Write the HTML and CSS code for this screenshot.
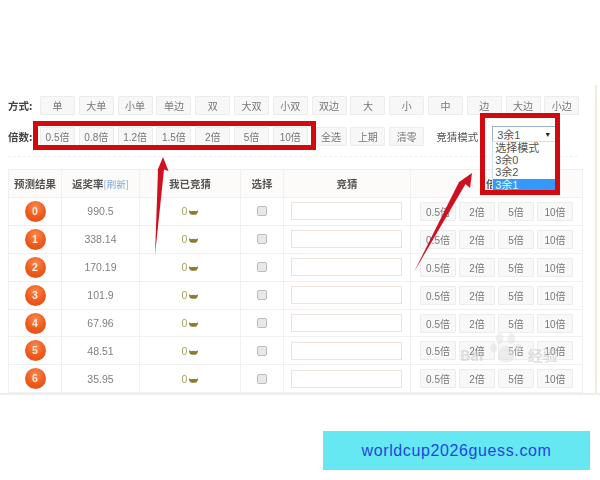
FILE: index.html
```html
<!DOCTYPE html>
<html lang="zh">
<head>
<meta charset="utf-8">
<title>竞猜</title>
<link rel="stylesheet" href="styles.css">
</head>
<body>
<div class="page">
  <div class="sheet">
    <div class="toolbar first">
      <span class="label">方式:</span>
      <div class="btns"><button>单</button><button>大单</button><button>小单</button><button>单边</button><button>双</button><button>大双</button><button>小双</button><button>双边</button><button>大</button><button>小</button><button>中</button><button>边</button><button>大边</button><button>小边</button></div>
    </div>
    <div class="toolbar second">
      <span class="label">倍数:</span>
      <div class="btns"><button>0.5倍</button><button>0.8倍</button><button>1.2倍</button><button>1.5倍</button><button>2倍</button><button>5倍</button><button>10倍</button><button class="narrow">全选</button><button>上期</button><button>清零</button></div>
      <span class="mode">竞猜模式</span>
      <div class="select">
        <div class="closed"><span>3余1</span><i>▼</i></div>
        <ul class="options"><li>选择模式</li><li>3余0</li><li>3余2</li><li class="on">3余1</li></ul>
      </div>
    </div>
    <div class="rule"></div>
    <table>
      <colgroup><col class="c1"><col class="c2"><col class="c3"><col class="c4"><col class="c5"><col class="c6"></colgroup>
      <thead><tr><th>预测结果</th><th>返奖率<span class="refresh">[刷新]</span></th><th>我已竞猜</th><th>选择</th><th>竞猜</th><th>倍数</th></tr></thead>
      <tbody>
        <tr><td><span class="ball">0</span></td><td>990.5</td><td class="bet">0<svg class="ingot" viewBox="0 0 10 6"><path d="M0 1 L2.5 2.2 Q5 1 7.5 2.2 L10 1 Q10 5 7 6 H3 Q0 5 0 1Z"/></svg></td><td><span class="check"></span></td><td><span class="field"></span></td><td><div class="mini"><button>0.5倍</button><button>2倍</button><button>5倍</button><button>10倍</button></div></td></tr>
        <tr><td><span class="ball">1</span></td><td>338.14</td><td class="bet">0<svg class="ingot" viewBox="0 0 10 6"><path d="M0 1 L2.5 2.2 Q5 1 7.5 2.2 L10 1 Q10 5 7 6 H3 Q0 5 0 1Z"/></svg></td><td><span class="check"></span></td><td><span class="field"></span></td><td><div class="mini"><button>0.5倍</button><button>2倍</button><button>5倍</button><button>10倍</button></div></td></tr>
        <tr><td><span class="ball">2</span></td><td>170.19</td><td class="bet">0<svg class="ingot" viewBox="0 0 10 6"><path d="M0 1 L2.5 2.2 Q5 1 7.5 2.2 L10 1 Q10 5 7 6 H3 Q0 5 0 1Z"/></svg></td><td><span class="check"></span></td><td><span class="field"></span></td><td><div class="mini"><button>0.5倍</button><button>2倍</button><button>5倍</button><button>10倍</button></div></td></tr>
        <tr><td><span class="ball">3</span></td><td>101.9</td><td class="bet">0<svg class="ingot" viewBox="0 0 10 6"><path d="M0 1 L2.5 2.2 Q5 1 7.5 2.2 L10 1 Q10 5 7 6 H3 Q0 5 0 1Z"/></svg></td><td><span class="check"></span></td><td><span class="field"></span></td><td><div class="mini"><button>0.5倍</button><button>2倍</button><button>5倍</button><button>10倍</button></div></td></tr>
        <tr><td><span class="ball">4</span></td><td>67.96</td><td class="bet">0<svg class="ingot" viewBox="0 0 10 6"><path d="M0 1 L2.5 2.2 Q5 1 7.5 2.2 L10 1 Q10 5 7 6 H3 Q0 5 0 1Z"/></svg></td><td><span class="check"></span></td><td><span class="field"></span></td><td><div class="mini"><button>0.5倍</button><button>2倍</button><button>5倍</button><button>10倍</button></div></td></tr>
        <tr><td><span class="ball">5</span></td><td>48.51</td><td class="bet">0<svg class="ingot" viewBox="0 0 10 6"><path d="M0 1 L2.5 2.2 Q5 1 7.5 2.2 L10 1 Q10 5 7 6 H3 Q0 5 0 1Z"/></svg></td><td><span class="check"></span></td><td><span class="field"></span></td><td><div class="mini"><button>0.5倍</button><button>2倍</button><button>5倍</button><button>10倍</button></div></td></tr>
        <tr><td><span class="ball">6</span></td><td>35.95</td><td class="bet">0<svg class="ingot" viewBox="0 0 10 6"><path d="M0 1 L2.5 2.2 Q5 1 7.5 2.2 L10 1 Q10 5 7 6 H3 Q0 5 0 1Z"/></svg></td><td><span class="check"></span></td><td><span class="field"></span></td><td><div class="mini"><button>0.5倍</button><button>2倍</button><button>5倍</button><button>10倍</button></div></td></tr>
      </tbody>
    </table>
    <div class="frame frame-left"></div>
    <div class="frame frame-right"></div>
    <svg class="arrows" viewBox="0 0 600 480" aria-hidden="true">
      <path class="arrow" d="M163 157 L168.500 171 L164 169.500 L155 255 L158 170 L157 171.500 Z"/>
      <path class="arrow" d="M472 173 L470 188 L465.500 184 L414 272 L459 182 L462 180 Z"/>
    </svg>
    <div class="mark">
      <span>Bai</span>
      <svg class="paw" viewBox="0 0 30 30"><ellipse cx="9" cy="6" rx="3.500" ry="5"/><ellipse cx="20" cy="6" rx="3.500" ry="5"/><ellipse cx="3.500" cy="15" rx="3" ry="4"/><ellipse cx="26.500" cy="15" rx="3" ry="4"/><path d="M15 13 C9 13 5 24 9 27 C12 29 18 29 21 27 C25 24 21 13 15 13Z"/></svg>
      <span>经验</span>
    </div>
  </div>
  <div class="banner">worldcup2026guess.com</div>
</div>
</body>
</html>
```
FILE: styles.css
```css
* { box-sizing: border-box; }
html, body { margin: 0; padding: 0; background: #fff; }
body { width: 600px; height: 480px; overflow: hidden; font-family: "Liberation Sans", "Noto Sans CJK SC", sans-serif; color: #777; }
.page { width: 600px; height: 480px; }
.sheet { position: relative; height: 395px; padding: 96px 0 0 8px; border-bottom: 2px solid #eeeeee; filter: blur(0.55px); }
.sheet::after { content: ""; position: absolute; right: 3px; top: 85px; bottom: 0; width: 2px; background: #f3ead9; }
.toolbar { display: flex; align-items: center; height: 19px; }
.second { margin-top: 12px; }
.label { width: 32px; font: bold 10.5px "Noto Sans CJK SC", sans-serif; color: #444; white-space: nowrap; }
.btns { display: flex; gap: 3.8px; }
button { width: 35px; height: 19px; padding: 0; font: 10px "Liberation Sans", "Noto Sans CJK SC", sans-serif; color: #777; background: #f7f7f7; border: 1px solid #ececec; border-radius: 1px; white-space: nowrap; }
.narrow { margin-left: 4px; width: 31px; }
.mode { margin-left: 12px; font: 10.5px "Noto Sans CJK SC", sans-serif; color: #555; white-space: nowrap; }
.select { position: relative; align-self: flex-start; margin: -1px 0 0 14px; width: 64px; height: 16px; }
.closed { display: flex; justify-content: space-between; align-items: center; height: 16px; padding: 0 4px; font: 11px "Liberation Sans", "Noto Sans CJK SC", sans-serif; color: #555; background: #fff; border: 1px solid #9db4d0; }
.closed i { font-size: 7px; font-style: normal; color: #222; }
.options { position: absolute; z-index: 2; left: 0; top: 15px; width: 64px; height: 50px; margin: 0; padding: 0; list-style: none; background: #fff; border: 1px solid #cfe0ee; font: 11px/12.2px "Liberation Sans", "Noto Sans CJK SC", sans-serif; color: #555; }
.options li { padding-left: 2px; height: 12.2px; white-space: nowrap; }
.options .on { background: #3399ff; color: #dff; }
.rule { margin-top: 10px; width: 570px; border-top: 1px dashed #f0f0f0; }
table { margin-top: 12px; width: 574px; border-collapse: collapse; table-layout: fixed; }
.c1 { width: 53px; } .c2 { width: 78px; } .c3 { width: 101px; } .c4 { width: 43px; } .c5 { width: 127px; } .c6 { width: 172px; }
th, td { padding: 0; text-align: center; border: 1px solid #f0f0f0; }
th { height: 28px; background: #fdfbf9; font: bold 10.5px "Noto Sans CJK SC", sans-serif; color: #555; white-space: nowrap; }
td { height: 27.9px; font-size: 10.5px; color: #808080; }
.refresh { color: #7aa6d8; font-weight: normal; font-size: 9.5px; }
.ball { display: block; width: 21px; height: 21px; margin: 0 auto; border-radius: 50%; background: radial-gradient(circle at 50% 30%, #f98a4f 0, #ec5a1c 55%, #e34c10 100%); color: #fde9dc; font: bold 10.5px/21px "Liberation Sans", sans-serif; }
.bet { color: #a3a35e; }
.ingot { width: 9px; height: 6px; margin-left: 2px; fill: #8d7a2a; }
.check { display: block; width: 10px; height: 10px; margin: 0 auto; border: 1px solid #bbb; border-radius: 2px; background: #e8e8e8; }
.field { display: block; width: 111px; height: 18px; margin: 0 auto 0 7px; background: #fff; border: 1px solid #eee3dc; }
.mini { display: flex; gap: 3px; padding-left: 9px; }
.mini button { width: 36px; height: 19px; background: #f8f8f8; }
.frame { position: absolute; z-index: 3; border: 5px solid #d2090f; }
.frame-left { left: 33px; top: 121px; width: 283px; height: 29px; }
.frame-right { left: 480px; top: 113px; width: 80px; height: 82px; }
.arrows { position: absolute; z-index: 3; left: 0; top: 0; width: 600px; height: 480px; pointer-events: none; }
.arrow { fill: #cf1020; }
.mark { position: absolute; z-index: 4; left: 460px; top: 332px; display: flex; align-items: flex-end; gap: 6px; height: 32px; color: rgba(195,195,195,.5); font: bold 15px/18px "Noto Sans CJK SC", sans-serif; }
.paw { width: 32px; height: 32px; fill: rgba(225,225,225,.55); }
.banner { width: 267px; height: 39px; margin: 36px 0 0 323px; background: #66e8f3; color: #1e46e0; font: 16px/39px "Liberation Sans", sans-serif; letter-spacing: .62px; text-align: center; }
```
